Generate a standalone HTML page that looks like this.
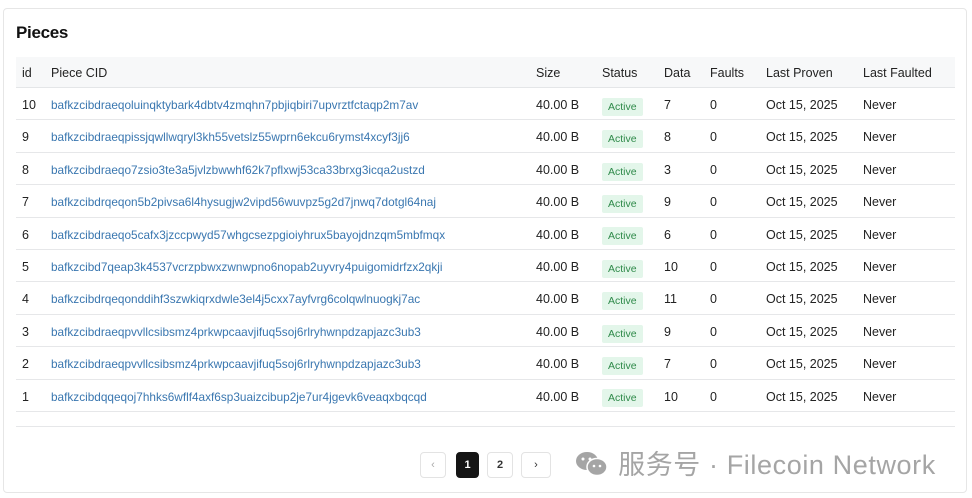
<!DOCTYPE html>
<html><head><meta charset="utf-8"><style>
*{margin:0;padding:0;box-sizing:border-box}
body{width:972px;height:498px;background:#fff;font-family:"Liberation Sans",Arial,sans-serif;position:relative;overflow:hidden;color:#222}
.card{position:absolute;left:3px;top:8px;width:964px;height:485px;border:1px solid #e6e6e6;border-radius:4px;background:#fff}
h1{position:absolute;left:16px;top:23px;font-size:17px;font-weight:900;color:#111;letter-spacing:-0.3px}
.hdr{position:absolute;left:16px;top:57px;width:939px;height:31px;background:#f7f8f9;border-bottom:1px solid #e4e6e8}
.row{position:absolute;left:16px;width:939px;height:32.4px;border-bottom:1px solid #e6e7e9}
.c{position:absolute;top:2px;line-height:31px;font-size:12.5px;white-space:nowrap}
.hdr .c{top:1px;font-weight:500;color:#222;line-height:31px;font-size:12.5px}
.cid{color:#3a77b0;font-size:11.8px}
.badge{display:inline-block;background:#e3f6ea;color:#2f8a4a;font-size:10.5px;line-height:18px;padding:0 6px;border-radius:2px;vertical-align:middle}
.pg{position:absolute;top:452px;width:26px;height:26px;border:1px solid #e3e3e3;border-radius:4px;text-align:center;line-height:24px;font-size:11px;font-weight:bold;color:#333;background:#fff}
.wm{position:absolute;left:574px;top:443px;font-family:"Liberation Sans","Noto Sans CJK SC",sans-serif;font-size:27px;color:#a5a5a5;white-space:nowrap;letter-spacing:0.6px}
</style></head><body>
<div class="card"></div>
<h1>Pieces</h1>
<div class="hdr">
<span class="c" style="left:6px">id</span><span class="c" style="left:35px">Piece CID</span><span class="c" style="left:520px">Size</span><span class="c" style="left:586px">Status</span><span class="c" style="left:648px">Data</span><span class="c" style="left:694px">Faults</span><span class="c" style="left:750px">Last Proven</span><span class="c" style="left:847px">Last Faulted</span>
</div>
<div id="rows"></div>
<div class="row" style="top:395px;height:32px"></div>
<div class="pg" style="left:420px;color:#aaa;font-weight:normal">‹</div>
<div class="pg" style="left:456px;background:#151515;color:#fff;border-color:#151515;width:23px">1</div>
<div class="pg" style="left:487px;width:26px">2</div>
<div class="pg" style="left:521px;width:30px;font-weight:normal">›</div>
<div class="wm"><svg width="36" height="28" viewBox="0 0 36 28" style="vertical-align:-4px"><ellipse cx="13" cy="11" rx="11" ry="9" fill="#a5a5a5"/><ellipse cx="23" cy="17" rx="10" ry="8.5" fill="#a5a5a5" stroke="#fff" stroke-width="1.5"/><circle cx="9" cy="9" r="1.5" fill="#fff"/><circle cx="16" cy="9" r="1.5" fill="#fff"/><circle cx="20" cy="16" r="1.3" fill="#fff"/><circle cx="26" cy="16" r="1.3" fill="#fff"/></svg> 服务号 · Filecoin Network</div>
<script>
var d=[["10","bafkzcibdraeqoluinqktybark4dbtv4zmqhn7pbjiqbiri7upvrztfctaqp2m7av","7"],
["9","bafkzcibdraeqpissjqwllwqryl3kh55vetslz55wprn6ekcu6rymst4xcyf3jj6","8"],
["8","bafkzcibdraeqo7zsio3te3a5jvlzbwwhf62k7pflxwj53ca33brxg3icqa2ustzd","3"],
["7","bafkzcibdrqeqon5b2pivsa6l4hysugjw2vipd56wuvpz5g2d7jnwq7dotgl64naj","9"],
["6","bafkzcibdraeqo5cafx3jzccpwyd57whgcsezpgioiyhrux5bayojdnzqm5mbfmqx","6"],
["5","bafkzcibd7qeap3k4537vcrzpbwxzwnwpno6nopab2uyvry4puigomidrfzx2qkji","10"],
["4","bafkzcibdrqeqonddihf3szwkiqrxdwle3el4j5cxx7ayfvrg6colqwlnuogkj7ac","11"],
["3","bafkzcibdraeqpvvllcsibsmz4prkwpcaavjifuq5soj6rlryhwnpdzapjazc3ub3","9"],
["2","bafkzcibdraeqpvvllcsibsmz4prkwpcaavjifuq5soj6rlryhwnpdzapjazc3ub3","7"],
["1","bafkzcibdqqeqoj7hhks6wflf4axf6sp3uaizcibup2je7ur4jgevk6veaqxbqcqd","10"]];
var h="";d.forEach(function(r,i){var t=88+i*32.4;
h+='<div class="row" style="top:'+t+'px"><span class="c" style="left:6px">'+r[0]+'</span><span class="c cid" style="left:35px">'+r[1]+'</span><span class="c" style="left:520px">40.00 B</span><span class="c" style="left:586px;top:3px"><span class="badge">Active</span></span><span class="c" style="left:648px">'+r[2]+'</span><span class="c" style="left:694px">0</span><span class="c" style="left:750px">Oct 15, 2025</span><span class="c" style="left:847px">Never</span></div>';});
document.getElementById("rows").innerHTML=h;
</script>
</body></html>
